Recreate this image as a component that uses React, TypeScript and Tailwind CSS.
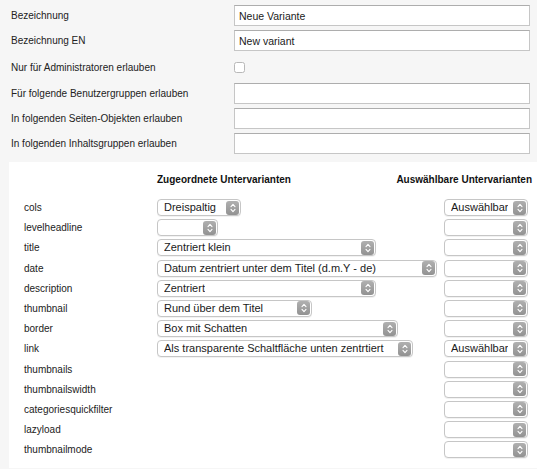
import React from "react";

const font = { fontFamily: '"Liberation Sans", Arial, Helvetica, sans-serif' };

const topRows = [
    { label: "Bezeichnung", value: "Neue Variante", kind: "input" },
    { label: "Bezeichnung EN", value: "New variant", kind: "input" },
    { label: "Nur für Administratoren erlauben", value: "", kind: "checkbox" },
    { label: "Für folgende Benutzergruppen erlauben", value: "", kind: "input" },
    { label: "In folgenden Seiten-Objekten erlauben", value: "", kind: "input" },
    { label: "In folgenden Inhaltsgruppen erlauben", value: "", kind: "input" },
];

// middle select: [text, width in px] or null when the row has none
const subRows: { name: string; mid: [string, number] | null; right: string }[] = [
    { name: "cols", mid: ["Dreispaltig", 84], right: "Auswählbar" },
    { name: "levelheadline", mid: ["", 61], right: "" },
    { name: "title", mid: ["Zentriert klein", 219], right: "" },
    { name: "date", mid: ["Datum zentriert unter dem Titel (d.m.Y - de)", 280], right: "" },
    { name: "description", mid: ["Zentriert", 219], right: "" },
    { name: "thumbnail", mid: ["Rund über dem Titel", 155], right: "" },
    { name: "border", mid: ["Box mit Schatten", 241], right: "" },
    { name: "link", mid: ["Als transparente Schaltfläche unten zentrtiert", 256], right: "Auswählbar" },
    { name: "thumbnails", mid: null, right: "" },
    { name: "thumbnailswidth", mid: null, right: "" },
    { name: "categoriesquickfilter", mid: null, right: "" },
    { name: "lazyload", mid: null, right: "" },
    { name: "thumbnailmode", mid: null, right: "" },
];

function Chevrons() {
    return (
        <span className="flex h-[14px] w-[13px] shrink-0 items-center justify-center rounded-[3px] bg-gradient-to-b from-[#b0b0b0] to-[#929292]">
            <svg width="6" height="10" viewBox="0 0 6 10" fill="none">
                <path d="M1 3.6 L3 1.4 L5 3.6" stroke="white" strokeWidth="1.1" strokeLinecap="round" strokeLinejoin="round" />
                <path d="M1 6.4 L3 8.6 L5 6.4" stroke="white" strokeWidth="1.1" strokeLinecap="round" strokeLinejoin="round" />
            </svg>
        </span>
    );
}

function MacSelect({ text, width }: { text: string; width: number }) {
    return (
        <div
            className="flex h-[17px] items-center justify-between rounded-[4px] border border-[#c6c6c6] bg-white pl-[6px] pr-[1px] shadow-[0_1px_0_rgba(0,0,0,0.05)]"
            style={{ width }}
        >
            <span className="truncate text-[11px] leading-none text-[#1a1a1a]">{text}</span>
            <Chevrons />
        </div>
    );
}

export default function App() {
    return (
        <div className="min-h-[469px] w-[537px] overflow-hidden bg-[#f6f6f6]" style={font}>
            {/* general settings */}
            <div className="flex flex-col gap-[4px] pl-[11px] pr-[7px] pt-[5px]">
                {topRows.map((row) => (
                    <div key={row.label} className={`flex items-center ${row.kind === "checkbox" ? "h-[24px]" : "h-[21px]"}`}>
                        <span className="w-[223px] shrink-0 text-[10px] text-[#222]">{row.label}</span>
                        {row.kind === "input" ? (
                            <input
                                readOnly
                                defaultValue={row.value}
                                className="h-[21px] flex-1 border border-[#c6c6c6] border-t-[#adadad] bg-white px-[4px] text-[10.5px] text-[#1a1a1a] outline-none"
                            />
                        ) : (
                            <span className="h-[11px] w-[11px] rounded-[2.5px] border border-[#b8b8b8] bg-white" />
                        )}
                    </div>
                ))}
            </div>

            {/* sub variants */}
            <div className="ml-[9px] mt-[8px] bg-white pb-[10px] pl-[15px] pr-[5px] pt-[9px]">
                <div className="flex h-[16px] items-center text-[10px] font-bold text-[#111]">
                    <span className="w-[133px] shrink-0" />
                    <span className="flex-1">Zugeordnete Untervarianten</span>
                    <span className="whitespace-nowrap">Auswählbare Untervarianten</span>
                </div>
                <div className="mt-[12px] flex flex-col gap-[3.2px]">
                    {subRows.map((row) => (
                        <div key={row.name} className="flex h-[17px] items-center">
                            <span className="w-[133px] shrink-0 text-[10px] text-[#222]">{row.name}</span>
                            <div className="flex-1">{row.mid && <MacSelect text={row.mid[0]} width={row.mid[1]} />}</div>
                            <div className="w-[88px] shrink-0">
                                <MacSelect text={row.right} width={84} />
                            </div>
                        </div>
                    ))}
                </div>
            </div>
        </div>
    );
}
